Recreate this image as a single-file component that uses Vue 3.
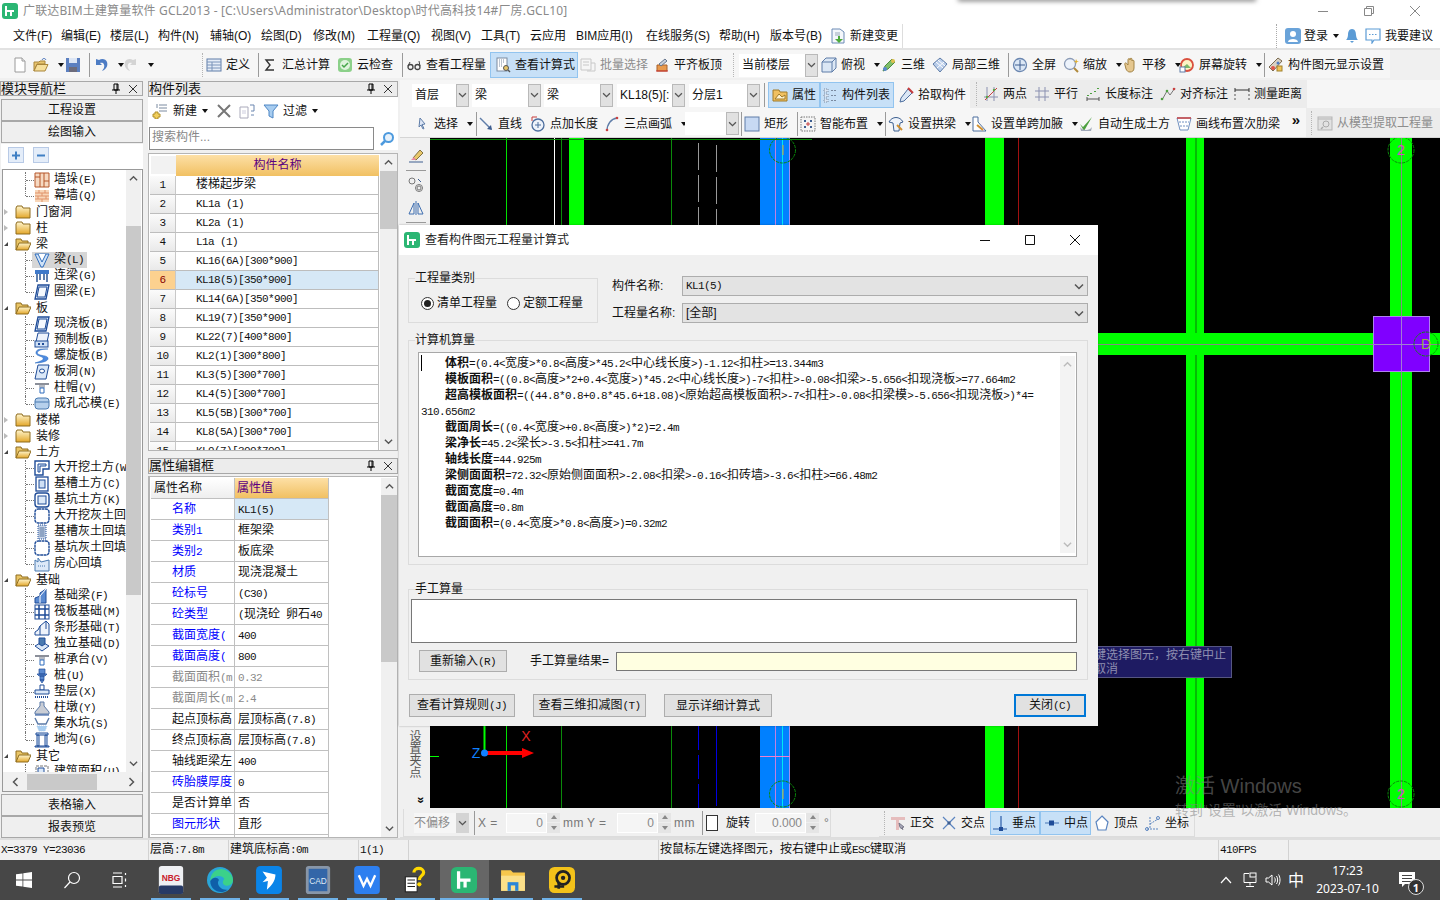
<script setup>
// GCL2013 main window with the quantity formula dialog open
const seg = (s) => s.split(/([\x20-\x7e]+)/).filter(Boolean).map((t) => ({ t, m: /^[\x20-\x7e]/.test(t) }))

const menus = [
  ['文件(F)', 48], ['编辑(E)', 49], ['楼层(L)', 48], ['构件(N)', 52], ['辅轴(O)', 51], ['绘图(D)', 52], ['修改(M)', 54],
  ['工程量(Q)', 64], ['视图(V)', 50], ['工具(T)', 49], ['云应用', 46], ['BIM应用(I)', 70], ['在线服务(S)', 73], ['帮助(H)', 51], ['版本号(B)', 60],
]

const topBar = [
  { w: 12 }, { i: 'doc', w: 21 }, { i: 'open', c: 1, w: 32 }, { i: 'save', w: 20 }, { sep: 1, w: 8 },
  { i: 'undo', c: 1, w: 30 }, { i: 'redo', c: 1, w: 29 }, { w: 46 }, { grip: 1, w: 8 },
  { i: 'def', t: '定义', w: 48 }, { sep: 1, w: 8 }, { i: 'sigma', t: '汇总计算', w: 75 }, { i: 'cloud', t: '云检查', w: 61 }, { sep: 1, w: 8 },
  { i: 'glass', t: '查看工程量', w: 84 }, { i: 'calc', t: '查看计算式', w: 88, pl: 5, on: 1 },
  { i: 'batch', t: '批量选择', w: 76, pl: 2, off: 1 }, { i: 'align', t: '平齐板顶', w: 74 }, { grip: 1, w: 11 },
  { combo: '当前楼层', w: 79 }, { w: 3 }, { i: 'box', t: '俯视', c: 1, w: 60 }, { i: 'tri', t: '三维', w: 51 }, { i: 'cube', t: '局部三维', w: 72 }, { sep: 1, w: 8 },
  { i: 'fit', t: '全屏', w: 51 }, { i: 'zoom', t: '缩放', c: 1, w: 59 }, { i: 'hand', t: '平移', c: 1, w: 57 }, { i: 'rot', t: '屏幕旋转', c: 1, w: 81 }, { sep: 1, w: 8 },
  { i: 'disp', t: '构件图元显示设置', w: 121 },
]

const rowOne = [
  { w: 12 }, { combo: '首层', w: 57 }, { w: 3 }, { combo: '梁', w: 69 }, { w: 3 }, { combo: '梁', w: 69 }, { w: 4 }, { combo: 'KL18(5)[:', w: 68 }, { w: 4 }, { combo: '分层1', w: 71 }, { sep: 1, w: 8 },
  { i: 'attr', t: '属性', w: 52, pl: 4, on: 1 }, { i: 'list', t: '构件列表', w: 74, pl: 2, on: 1 }, { i: 'pick', t: '拾取构件', w: 76, pl: 4 },
  { grip: 1, w: 13, z: 1 }, { i: 'two', t: '两点', w: 51, z: 1 }, { i: 'para', t: '平行', w: 51, z: 1 }, { i: 'lenm', t: '长度标注', w: 73, z: 1 }, { i: 'alim', t: '对齐标注', w: 76, pl: 2, z: 1 }, { i: 'meas', t: '测量距离', w: 73, z: 1 },
]

const rowTwo = [
  { w: 14 }, { i: 'arrow', t: '选择', c: 1, w: 60 }, { sep: 1, w: 4 }, { i: 'line', t: '直线', w: 52 }, { i: 'pointlen', t: '点加长度', w: 74 }, { i: 'arc', t: '三点画弧', c: 1, w: 81 },
  { combo: ' ', w: 54 }, { sep: 1, w: 5 }, { i: 'rect', t: '矩形', w: 50 }, { sep: 1, w: 6 }, { i: 'smart', t: '智能布置', c: 1, w: 82 }, { sep: 1, w: 6 },
  { i: 'archb', t: '设置拱梁', c: 1, w: 83 }, { i: 'haunch', t: '设置单跨加腋', c: 1, w: 107 }, { i: 'auto', t: '自动生成土方', w: 98 }, { i: 'rib', t: '画线布置次肋梁', w: 110 },
  { more: 1, w: 20 }, { grip: 1, w: 11, z: 1 }, { i: 'model', t: '从模型提取工程量', w: 123, off: 1, z: 1 },
]

const snapBar = [
  { grip: 1, w: 11 }, { i: 'ortho', t: '正交', w: 51 }, { i: 'cross', t: '交点', w: 49 }, { i: 'perp', t: '垂点', w: 50, pl: 2, on: 1 }, { i: 'mid', t: '中点', w: 51, pl: 4, on: 1 },
  { i: 'vert', t: '顶点', w: 53, pl: 3 }, { i: 'coord', t: '坐标', w: 50, pl: 1 },
]

const tree = [
  { t: '墙垛(E)', i: 't-wall' }, { t: '幕墙(Q)', i: 't-brick', last: 1 },
  { f: 1, t: '门窗洞' }, { f: 1, t: '柱' }, { f: 1, open: 1, t: '梁' },
  { t: '梁(L)', i: 't-beam', picked: 1 }, { t: '连梁(G)', i: 't-lian' }, { t: '圈梁(E)', i: 't-slab', last: 1 },
  { f: 1, open: 1, t: '板' },
  { t: '现浇板(B)', i: 't-slab' }, { t: '预制板(B)', i: 't-pre' }, { t: '螺旋板(B)', i: 't-spiral' }, { t: '板洞(N)', i: 't-hole' }, { t: '柱帽(V)', i: 't-cap' }, { t: '成孔芯模(E)', i: 't-core', last: 1 },
  { f: 1, t: '楼梯' }, { f: 1, t: '装修' }, { f: 1, open: 1, t: '土方' },
  { t: '大开挖土方(W)', i: 't-dig' }, { t: '基槽土方(C)', i: 't-slot' }, { t: '基坑土方(K)', i: 't-pit' }, { t: '大开挖灰土回填', i: 't-pit2' }, { t: '基槽灰土回填', i: 't-slot2' }, { t: '基坑灰土回填', i: 't-pit2' }, { t: '房心回填', i: 't-fill', last: 1 },
  { f: 1, open: 1, t: '基础' },
  { t: '基础梁(F)', i: 't-fbeam' }, { t: '筏板基础(M)', i: 't-raft' }, { t: '条形基础(T)', i: 't-strip' }, { t: '独立基础(D)', i: 't-ind' }, { t: '桩承台(V)', i: 't-cap' }, { t: '桩(U)', i: 't-pile' }, { t: '垫层(X)', i: 't-pad' }, { t: '柱墩(Y)', i: 't-pier' }, { t: '集水坑(S)', i: 't-sump' }, { t: '地沟(G)', i: 't-trench', last: 1 },
  { f: 1, open: 1, t: '其它' }, { t: '建筑面积(U)', i: 't-area' },
]

const parts = ['楼梯起步梁', 'KL1a (1)', 'KL2a (1)', 'L1a (1)', 'KL16(6A)[300*900]', 'KL18(5)[350*900]', 'KL14(6A)[350*900]', 'KL19(7)[350*900]', 'KL22(7)[400*800]', 'KL2(1)[300*800]', 'KL3(5)[300*700]', 'KL4(5)[300*700]', 'KL5(5B)[300*700]', 'KL8(5A)[300*700]', 'KL9(7)[300*700]']

const attrs = [
  ['名称', 'KL1(5)', 'b'], ['类别1', '框架梁', 'b'], ['类别2', '板底梁', 'b'], ['材质', '现浇混凝土', 'b'], ['砼标号', '(C30)', 'b'], ['砼类型', '(现浇砼 卵石40', 'b'],
  ['截面宽度(', '400', 'b'], ['截面高度(', '800', 'b'], ['截面面积(m', '0.32', 'g'], ['截面周长(m', '2.4', 'g'], ['起点顶标高', '层顶标高(7.8)', ''], ['终点顶标高', '层顶标高(7.8)', ''],
  ['轴线距梁左', '400', ''], ['砖胎膜厚度', '0', 'b'], ['是否计算单', '否', ''], ['图元形状', '直形', 'b'], ['', '', ''],
]

const formulas = [
  ['体积', '=(0.4<宽度>*0.8<高度>*45.2<中心线长度>)-1.12<扣柱>=13.344m3'],
  ['模板面积', '=((0.8<高度>*2+0.4<宽度>)*45.2<中心线长度>)-7<扣柱>-0.08<扣梁>-5.656<扣现浇板>=77.664m2'],
  ['超高模板面积', '=((44.8*0.8+0.8*45.6+18.08)<原始超高模板面积>-7<扣柱>-0.08<扣梁模>-5.656<扣现浇板>)*4='],
  ['', '310.656m2'],
  ['截面周长', '=((0.4<宽度>+0.8<高度>)*2)=2.4m'],
  ['梁净长', '=45.2<梁长>-3.5<扣柱>=41.7m'],
  ['轴线长度', '=44.925m'],
  ['梁侧面面积', '=72.32<原始侧面面积>-2.08<扣梁>-0.16<扣砖墙>-3.6<扣柱>=66.48m2'],
  ['截面宽度', '=0.4m'],
  ['截面高度', '=0.8m'],
  ['截面面积', '=(0.4<宽度>*0.8<高度>)=0.32m2'],
]

const status = [['X=3379 Y=23036', 149], ['层高:7.8m', 80], ['建筑底标高:0m', 130], ['1(1)', 50], ['', 250], ['按鼠标左键选择图元，按右键中止或ESC键取消', 560], ['410FPS', 70]]

const apps = [['a-nbg', 1], ['a-edge', 1], ['a-feather', 1], ['a-cad', 1], ['a-wps', 1], ['a-help', 1], ['a-gcl', 1, 1], ['a-files', 1], ['a-lens', 1]]

const kind = (it) => {
  if (it.sep) return 'sep'
  if (it.grip) return 'grip'
  if (it.combo) return 'combo'
  if (it.more) return 'more'
  return { btn: it.t || it.i, on: it.on, off: it.off }
}
const boxStyle = (it) => ({ width: it.w + 'px', paddingLeft: (it.pl || 0) + 'px' })
</script>

<template>
  <div class="app">
    <svg class="sprite" width="0" height="0">
      <defs>
        <linearGradient id="gold" x1="0" y1="0" x2="0" y2="1"><stop offset="0" stop-color="#fff6cf" /><stop offset="1" stop-color="#e3a72a" /></linearGradient>
        <symbol id="gcl" viewBox="0 0 16 16"><rect width="16" height="16" rx="3" fill="#2bb673"/><path d="M4 3v10M4 8h8M9 8v5" stroke="#fff" stroke-width="2" fill="none"/></symbol>
        <symbol id="doc" viewBox="0 0 16 16"><path d="M3 1h7l3 3v11H3z" fill="#fff" stroke="#9a9a9a"/><path d="M10 1v3h3" fill="#eee" stroke="#9a9a9a"/></symbol>
        <symbol id="open" viewBox="0 0 16 16"><path d="M1 5h5l1-1h5v3H4l-3 7z" fill="#e8c56e" stroke="#a9853a"/><path d="M4 7.500h11l-3 6.500H1z" fill="#f6df9b" stroke="#a9853a"/><path d="M9 3c1-2 3-2 4 0" stroke="#3b68b5" fill="none"/></symbol>
        <symbol id="save" viewBox="0 0 16 16"><path d="M1 1h14v14H1z" fill="#5b7fc0"/><path d="M4 1h8v5H4z" fill="#dde6f5"/><path d="M4 10h8v5H4z" fill="#6c6c7c"/></symbol>
        <symbol id="undo" viewBox="0 0 16 16"><path d="M3 2v6h6L7 6c3-1 5 1 4 5l-2 3c5-2 6-6 5-9-1-3-5-4-8-2z" fill="#4d7cc4"/></symbol>
        <symbol id="redo" viewBox="0 0 16 16"><path d="M13 2v6H7l2-2c-3-1-5 1-4 5l2 3C2 12 1 8 2 5c1-3 5-4 8-2z" fill="#d4d4d4"/></symbol>
        <symbol id="def" viewBox="0 0 16 16"><rect x="1" y="2" width="14" height="12" fill="#e6edf7" stroke="#5f7da8"/><path d="M1 5h14M6 5v9M1 8h14M1 11h14" stroke="#7b94ba"/></symbol>
        <symbol id="sigma" viewBox="0 0 16 16"><path d="M12 3H4l4 5-4 5h8" fill="none" stroke="#333" stroke-width="1.400"/></symbol>
        <symbol id="cloud" viewBox="0 0 16 16"><rect x="1" y="1" width="14" height="14" rx="3" fill="#8bd089"/><circle cx="8" cy="8" r="5" fill="#dff3dd"/><path d="M5 8l2 2 4-4" stroke="#45a549" stroke-width="1.500" fill="none"/></symbol>
        <symbol id="glass" viewBox="0 0 16 16"><circle cx="4.500" cy="10" r="2.500" fill="none" stroke="#444" stroke-width="1.300"/><circle cx="11.500" cy="10" r="2.500" fill="none" stroke="#444" stroke-width="1.300"/><path d="M2 9l2-4M14 9l-1-5" stroke="#444"/></symbol>
        <symbol id="calc" viewBox="0 0 16 16"><rect x="2" y="1" width="10" height="13" fill="#fff" stroke="#7a8aa0"/><path d="M4 3h6M4 5h6M4 7h4M4 9h4" stroke="#7a8aa0" stroke-dasharray="1 1"/><circle cx="11" cy="11" r="2.500" fill="#e6c66a" stroke="#555"/><path d="M13 13l2 2" stroke="#555" stroke-width="1.500"/></symbol>
        <symbol id="batch" viewBox="0 0 16 16"><path d="M1 2h10v11H1zM3 5h6M3 8h6M11 6h4v8H7" fill="none" stroke="#c8c8c8"/></symbol>
        <symbol id="align" viewBox="0 0 16 16"><path d="M3 14V8h10v6z" fill="#e89a4d" stroke="#a8602a"/><path d="M5 7l6-5 2 2-6 5z" fill="#c7cfdb" stroke="#68788f"/><path d="M2 14h12" stroke="#c33"/></symbol>
        <symbol id="box" viewBox="0 0 16 16"><path d="M1 5l4-4h10v10l-4 4H1z" fill="#dbe7f5" stroke="#5f7da8"/><path d="M1 5h10v10M11 5l4-4" fill="none" stroke="#5f7da8"/></symbol>
        <symbol id="tri" viewBox="0 0 16 16"><path d="M11 2L4 9l-2 5 5-2 7-7z" fill="#7fbf6a" stroke="#4d8a3e"/><circle cx="12" cy="4" r="2" fill="#e0c050"/><circle cx="4" cy="12" r="2" fill="#5a8ad0"/></symbol>
        <symbol id="cube" viewBox="0 0 16 16"><path d="M8 1l7 6-7 8-7-8z" fill="#b9cdea" stroke="#5f7da8"/><path d="M4 5l7 6M6 3l7 6M12 5l-7 6" stroke="#fff"/></symbol>
        <symbol id="fit" viewBox="0 0 16 16"><circle cx="8" cy="8" r="6.500" fill="#dbe7f5" stroke="#6a86b0" stroke-width="1.300"/><path d="M8 3v10M3 8h10" stroke="#3e5e90"/></symbol>
        <symbol id="zoom" viewBox="0 0 16 16"><circle cx="7" cy="7" r="5.500" fill="#edf3fb" stroke="#8a9ab5" stroke-width="1.300"/><path d="M11 11l4 4" stroke="#b08a3c" stroke-width="2"/><path d="M13 2l1 2 2 .500-2 .500-1 2-.500-2-2-.500 2-.500z" fill="#e0b030"/></symbol>
        <symbol id="hand" viewBox="0 0 16 16"><path d="M3 8c-1-2 1-3 2-1l1 1V3c0-2 2-2 2 0V2c0-1 2-1 2 0v2c0-1 2-1 2 0v7c0 3-2 4-4 4s-3-1-4-3z" fill="#e5c78f" stroke="#a28345"/></symbol>
        <symbol id="rot" viewBox="0 0 16 16"><circle cx="8" cy="8" r="6" fill="#fdf2c5" stroke="#d94f3d" stroke-width="1.800"/><path d="M3 11l5-4 4 4z" fill="#7cb86a"/><rect x="1" y="10" width="5" height="5" fill="#fff" stroke="#5f7da8"/></symbol>
        <symbol id="disp" viewBox="0 0 16 16"><path d="M1 10l9-9 4 3-9 10z" fill="#d9d2c4" stroke="#7a6a50"/><circle cx="5" cy="11" r="2" fill="#e0564a"/><circle cx="10" cy="6" r="1.500" fill="#4d7cc4"/><rect x="9" y="9" width="5" height="5" fill="#f1c557" stroke="#a0802c"/></symbol>
        <symbol id="newch" viewBox="0 0 16 16"><path d="M2 1h8l4 3v11H2z" fill="#f4f7fb" stroke="#6a8ab5"/><path d="M5 5h5M5 7h5" stroke="#9ab"/><path d="M10 8v3h3l-4 4-4-4h3V8z" fill="#4eaa3c"/></symbol>
        <symbol id="login" viewBox="0 0 16 16"><rect width="16" height="16" rx="3" fill="#6aa3d9"/><circle cx="8" cy="6" r="3" fill="#fff"/><path d="M3 14c0-4 10-4 10 0z" fill="#fff"/></symbol>
        <symbol id="bell" viewBox="0 0 16 16"><path d="M8 1c3 0 4 3 4 6s2 5 2 5H2s2-2 2-5 1-6 4-6z" fill="#5b9bd5"/><path d="M6 13h4l-2 2z" fill="#5b9bd5"/></symbol>
        <symbol id="chat" viewBox="0 0 16 16"><path d="M1 1h14v11H9l-2 3v-3H1z" fill="#fff" stroke="#5b9bd5" stroke-width="1.200"/><path d="M4 6.500h8" stroke="#5b9bd5" stroke-dasharray="1.500 1.500"/></symbol>
        <symbol id="attr" viewBox="0 0 16 16"><path d="M1 3h6l1 2h7v9H1z" fill="#f0c060" stroke="#a07a28"/><path d="M3 12l4-5 3 3 3-2v4H3z" fill="#fff3d0" stroke="#a07a28"/></symbol>
        <symbol id="list" viewBox="0 0 16 16"><path d="M2 2h4v3H2zM2 7h4v3H2zM2 12h4v3H2z" fill="#dbe7f5" stroke="#7a8aa0" stroke-dasharray="1 1"/><path d="M9 3.500h6M9 8.500h6M9 13.500h6" stroke="#7a8aa0" stroke-dasharray="2 1"/></symbol>
        <symbol id="pick" viewBox="0 0 16 16"><path d="M10 2l4 4-8 8-4 1 1-4z" fill="#dbe7f5" stroke="#4d6e9e"/><path d="M10 1l5 5" stroke="#c83c3c" stroke-width="2"/></symbol>
        <symbol id="two" viewBox="0 0 16 16"><path d="M4 1v14M11 1v14M1 11h14" stroke="#8a90b0"/><path d="M2 14L14 2" stroke="#c84040"/><circle cx="4" cy="11" r="1.200" fill="#5aa848"/><circle cx="11" cy="4" r="1.200" fill="#5aa848"/></symbol>
        <symbol id="para" viewBox="0 0 16 16"><path d="M5 1v14M11 1v14M1 5h14M1 11h14" stroke="#8a90b0"/></symbol>
        <symbol id="lenm" viewBox="0 0 16 16"><path d="M2 13h12M2 11v4M14 11v4" stroke="#555"/><path d="M3 9v1M6 7v1M10 5v1M13 2v1" stroke="#4da040" stroke-width="2"/></symbol>
        <symbol id="alim" viewBox="0 0 16 16"><path d="M2 14L7 5l3 4 5-7" fill="none" stroke="#777"/><circle cx="2" cy="13" r="1.300" fill="#4da040"/><circle cx="7" cy="5" r="1.300" fill="#4da040"/><circle cx="14" cy="3" r="1.300" fill="#c84040"/></symbol>
        <symbol id="meas" viewBox="0 0 16 16"><path d="M1 2v4M15 2v4M1 4h14" stroke="#333"/><path d="M1 8v7M15 8v7" stroke="#555" stroke-dasharray="2 2"/></symbol>
        <symbol id="arrow" viewBox="0 0 16 16"><path d="M6 2l5 6-3 .500 2 4-1 .500-2-4-2 2z" fill="#dde6f5" stroke="#5f7da8"/></symbol>
        <symbol id="line" viewBox="0 0 16 16"><path d="M2 2l11 11" stroke="#5f7da8" stroke-width="1.400"/><path d="M14 14l-5-1 4-4z" fill="#3e5e90"/></symbol>
        <symbol id="pointlen" viewBox="0 0 16 16"><circle cx="8" cy="9" r="6" fill="#eef3fa" stroke="#4d6e9e" stroke-width="1.300"/><path d="M8 6v6M5 9h6" stroke="#4d6e9e"/><path d="M2 1h5M2 1v4" stroke="#c83c3c"/></symbol>
        <symbol id="arc" viewBox="0 0 16 16"><path d="M3 15C3 8 7 3 13 2" fill="none" stroke="#5f7da8" stroke-width="1.300"/><circle cx="3" cy="14" r="1.300" fill="#c84040"/><circle cx="13" cy="2" r="1.300" fill="#c84040"/></symbol>
        <symbol id="rect" viewBox="0 0 16 16"><rect x="1" y="1" width="14" height="14" fill="#c7d9f3" stroke="#5f7da8"/></symbol>
        <symbol id="smart" viewBox="0 0 16 16"><rect x="1" y="1" width="14" height="14" fill="#f4f4f4" stroke="#777" stroke-dasharray="1.500 1"/><path d="M4 4h2v2H4zM10 4h2v2h-2zM4 10h2v2H4zM10 10h2v2h-2z" fill="#3e5e90"/><path d="M8 6v4M6 8h4" stroke="#c84040"/></symbol>
        <symbol id="archb" viewBox="0 0 16 16"><path d="M1 6c3-6 11-6 14 0l-3 1-1 8H6L5 7z" fill="#eef3fa" stroke="#3e6090"/><path d="M9 9l5 5" stroke="#d09030" stroke-width="2"/></symbol>
        <symbol id="haunch" viewBox="0 0 16 16"><path d="M2 1h5v5l8 9H2z" fill="#fff" stroke="#4d6e9e"/><path d="M6 9l6 5" stroke="#d09030" stroke-width="2"/></symbol>
        <symbol id="auto" viewBox="0 0 16 16"><path d="M2 8l3 3 9-10-8 14z" fill="#4da040"/><path d="M2 11c2 4 10 4 12 0l-1 4H3z" fill="#a0a8b8"/></symbol>
        <symbol id="rib" viewBox="0 0 16 16"><path d="M1 2h14L12 14H4z" fill="#fff" stroke="#7090c0"/><path d="M1 2h14" stroke="#c84040" stroke-width="1.500"/><path d="M3 6h10M4 10h8" stroke="#7090c0" stroke-dasharray="2 1"/></symbol>
        <symbol id="model" viewBox="0 0 16 16"><rect x="1" y="2" width="14" height="13" fill="#e2e2e2" stroke="#b5b5b5"/><path d="M1 4h14" stroke="#b5b5b5"/><circle cx="9" cy="9" r="3" fill="none" stroke="#aaa"/><path d="M6 12l-2 2" stroke="#aaa" stroke-width="1.500"/></symbol>
        <symbol id="ortho" viewBox="0 0 16 16"><path d="M1 2h14v3H9v10H6V5H1z" fill="#e6bdbd"/><path d="M9 8l5 4-2 .500 1 2-3-2z" fill="#aab" stroke="#778"/></symbol>
        <symbol id="cross" viewBox="0 0 16 16"><path d="M2 2l12 12M14 2L2 14" stroke="#5b85c0" stroke-width="1.200"/><rect x="6.500" y="6.500" width="3" height="3" fill="#3e5e90"/></symbol>
        <symbol id="perp" viewBox="0 0 16 16"><path d="M9 1v13M1 14h14" stroke="#2a5ca8" stroke-width="1.200"/><rect x="7" y="12" width="4" height="4" fill="#1f4c98"/></symbol>
        <symbol id="mid" viewBox="0 0 16 16"><path d="M1 8h14" stroke="#5b85c0" stroke-width="1.200"/><rect x="5" y="5.500" width="5" height="5" fill="#1f4c98"/></symbol>
        <symbol id="vert" viewBox="0 0 16 16"><path d="M8 1l6 6-2 8H4L2 7z" fill="#fff" stroke="#5b85c0" stroke-width="1.200"/></symbol>
        <symbol id="coord" viewBox="0 0 16 16"><path d="M2 14h12M5 2v12M5 9l8-5" stroke="#5b85c0" stroke-dasharray="2 1" fill="none"/><circle cx="13" cy="3" r="1.500" fill="none" stroke="#5b85c0"/><circle cx="2" cy="14" r="1.500" fill="none" stroke="#5b85c0"/></symbol>
        <symbol id="pin" viewBox="0 0 10 12"><path d="M3 1h4v6H3zM1 7h8M5 7v4M6 1v6" fill="none" stroke="#000"/></symbol>
        <symbol id="xx" viewBox="0 0 10 10"><path d="M1 1l8 8M9 1L1 9" stroke="#333"/></symbol>
        <symbol id="up" viewBox="0 0 10 7"><path d="M1 5.500l4-4 4 4" fill="none" stroke="#555" stroke-width="1.500"/></symbol>
        <symbol id="down" viewBox="0 0 10 7"><path d="M1 1.500l4 4 4-4" fill="none" stroke="#555" stroke-width="1.500"/></symbol>
        <symbol id="left" viewBox="0 0 7 10"><path d="M5.500 1l-4 4 4 4" fill="none" stroke="#555" stroke-width="1.500"/></symbol>
        <symbol id="right" viewBox="0 0 7 10"><path d="M1.500 1l4 4-4 4" fill="none" stroke="#555" stroke-width="1.500"/></symbol>
        <symbol id="plus" viewBox="0 0 16 16"><rect x=".5" y=".5" width="15" height="15" fill="#e4edf9" stroke="#b8cae6"/><path d="M4 8.500h8M8 4.500v8" stroke="#3f7fc4" stroke-width="2"/></symbol>
        <symbol id="minus" viewBox="0 0 16 16"><rect x=".5" y=".5" width="15" height="15" fill="#e4edf9" stroke="#b8cae6"/><path d="M4 8.500h8" stroke="#3f7fc4" stroke-width="2"/></symbol>
        <symbol id="folder" viewBox="0 0 16 14"><path d="M1 3l1-2h5l1 2h7v10H1z" fill="url(#gold)" stroke="#8f6d1f"/></symbol>
        <symbol id="folderopen" viewBox="0 0 16 14"><path d="M1 13V2h5l1 2h6v2" fill="#e9c566" stroke="#8f6d1f"/><path d="M4 6h12l-3 7H1z" fill="url(#gold)" stroke="#8f6d1f"/></symbol>
        <symbol id="newp" viewBox="0 0 16 16"><path d="M7 2h8M7 5h8M7 8h8" stroke="#7a8aa0"/><path d="M5 1v4" stroke="#7a8aa0"/><path d="M3 9h3v2h2v3H6v2H3v-2H1v-3h2z" fill="#f2cf5b" stroke="#b0902c"/></symbol>
        <symbol id="del" viewBox="0 0 16 16"><path d="M2 2l12 12M14 2L2 14" stroke="#777" stroke-width="2"/></symbol>
        <symbol id="copy" viewBox="0 0 16 16"><path d="M1 4h8v11H1z" fill="#fff" stroke="#aab"/><path d="M3 8h4M3 10h4" stroke="#ccd"/><path d="M11 2h4v6h-3M12 12h3" fill="none" stroke="#6a86b0"/></symbol>
        <symbol id="funnel" viewBox="0 0 16 16"><path d="M1 2h14L10 8v7l-4-2V8z" fill="#a8cdf0" stroke="#4d86c4"/></symbol>
        <symbol id="search" viewBox="0 0 16 16"><circle cx="9.500" cy="6.500" r="4.500" fill="#e6f1fb" stroke="#4d9ade" stroke-width="2"/><path d="M6 10l-4 4" stroke="#4d9ade" stroke-width="2.500"/></symbol>
        <symbol id="erase" viewBox="0 0 16 16"><path d="M5 10l7-8 3 3-7 7z" fill="#e8c86a" stroke="#807040"/><path d="M3 12l3-3 2 3z" fill="#e88aa0"/><path d="M1 14h14" stroke="#3e5e90"/></symbol>
        <symbol id="rings" viewBox="0 0 16 16"><circle cx="4" cy="4" r="3" fill="none" stroke="#777"/><circle cx="11" cy="11" r="3.500" fill="none" stroke="#777"/><circle cx="11" cy="11" r="2" fill="none" stroke="#777"/><path d="M10 2l3 3" stroke="#3e5e90"/></symbol>
        <symbol id="mirror" viewBox="0 0 16 16"><path d="M8 1v14M6 3L1 14h5zM10 3l5 11h-5z" fill="none" stroke="#3e6eb0"/></symbol>
        <symbol id="t-wall" viewBox="0 0 16 16"><path d="M1 1h14v14H1z" fill="#f6d9c2" stroke="#b5562a"/><path d="M6 1v14M10 1v14M1 5h5M10 9h5" stroke="#b5562a"/></symbol>
        <symbol id="t-brick" viewBox="0 0 16 16"><path d="M1 2h14v12H1z" fill="#f8d6b8"/><path d="M1 5h14M1 8h14M1 11h14M5 2v3M11 2v3M8 5v3M4 8v3M12 8v3M8 11v3" stroke="#e0936a"/></symbol>
        <symbol id="t-beam" viewBox="0 0 16 16"><path d="M1 2h14L9 15H7z" fill="#cfe2f7" stroke="#2f6dbd"/><path d="M4 2l4 8 4-8" fill="#fff" stroke="#2f6dbd"/></symbol>
        <symbol id="t-lian" viewBox="0 0 16 16"><path d="M1 2h14v4H1z" fill="#3f79c9"/><path d="M3 6v8M6 6v6M10 6v6M13 6v8" stroke="#1d4a8c" stroke-width="1.400"/></symbol>
        <symbol id="t-slab" viewBox="0 0 16 16"><path d="M4 1h11l-3 14H1z" fill="#d9e7f8" stroke="#1f4c98" stroke-width="1.300"/><path d="M5 3h8l-2 10H3z" fill="#f5f9fe" stroke="#1f4c98"/></symbol>
        <symbol id="t-pre" viewBox="0 0 16 16"><path d="M4 1h11l-2 9H2z" fill="#eef3fb" stroke="#1f4c98"/><rect x="1" y="9" width="13" height="6" fill="#cfe0f5" stroke="#1f4c98"/><path d="M4 12h2M8 12h2" stroke="#1f4c98" stroke-width="2"/></symbol>
        <symbol id="t-spiral" viewBox="0 0 16 16"><path d="M14 1C5 1 2 4 4 6s9 1 10 4-6 5-13 5c6-2 9-3 8-5S1 8 2 4s8-3 12-3z" fill="#4d8ae0" stroke="#2f6dbd" stroke-width=".5"/></symbol>
        <symbol id="t-hole" viewBox="0 0 16 16"><path d="M4 1h11l-3 14H1z" fill="#dbe8f8" stroke="#1f4c98"/><ellipse cx="8" cy="7" rx="2.500" ry="2" fill="#fff" stroke="#1f4c98"/></symbol>
        <symbol id="t-cap" viewBox="0 0 16 16"><path d="M1 3h14v2H1z" fill="#8b8f99"/><path d="M5 5h6v3H5z" fill="#b5bac4"/><path d="M6 8h4v5H6z" fill="#fff" stroke="#2f6dbd"/></symbol>
        <symbol id="t-core" viewBox="0 0 16 16"><rect x="1" y="2" width="14" height="11" rx="3" fill="#b6d0ec" stroke="#4a7ab0"/><path d="M1 6h14" stroke="#4a7ab0"/></symbol>
        <symbol id="t-dig" viewBox="0 0 16 16"><path d="M1 1h14v8H9v6H1z" fill="#fff" stroke="#1f4c98" stroke-width="1.400"/><path d="M4 4h8v2H6v6H4z" fill="#dce9f8" stroke="#1f4c98"/></symbol>
        <symbol id="t-slot" viewBox="0 0 16 16"><rect x="2" y="1" width="12" height="14" fill="#fff" stroke="#1f4c98" stroke-width="1.300"/><rect x="5" y="4" width="6" height="8" fill="#cfe0f5" stroke="#1f4c98"/></symbol>
        <symbol id="t-pit" viewBox="0 0 16 16"><rect x="1" y="1" width="14" height="14" rx="3" fill="#fff" stroke="#1f4c98" stroke-width="1.400"/><rect x="4" y="4" width="8" height="8" fill="#dce9f8" stroke="#1f4c98"/></symbol>
        <symbol id="t-pit2" viewBox="0 0 16 16"><rect x="1" y="1" width="14" height="14" rx="3" fill="#fff" stroke="#1f4c98" stroke-width="1.400" stroke-dasharray="3 .5"/></symbol>
        <symbol id="t-slot2" viewBox="0 0 16 16"><rect x="4" y="1" width="8" height="14" fill="#c7d4e8" stroke="#1f4c98" stroke-dasharray="1 1"/><rect x="5.500" y="3" width="5" height="10" fill="#8ea4c4"/></symbol>
        <symbol id="t-fill" viewBox="0 0 16 16"><path d="M1 4l3 2V2l3 4 8-2v11H1z" fill="#dce9f8" stroke="#4a7ab0"/><path d="M4 10h8" stroke="#4a7ab0" stroke-dasharray="1 1"/></symbol>
        <symbol id="t-fbeam" viewBox="0 0 16 16"><path d="M1 15V10l5-2V5l6-4v14z" fill="#5b8ad0" stroke="#1f4c98"/><path d="M6 8v7M12 1L6 8" stroke="#fff"/></symbol>
        <symbol id="t-raft" viewBox="0 0 16 16"><rect x="1" y="1" width="14" height="14" fill="#fff" stroke="#1f4c98"/><path d="M1 5h14M1 11h14M5 1v14M11 1v14" stroke="#1f4c98" stroke-width="1.500"/></symbol>
        <symbol id="t-strip" viewBox="0 0 16 16"><path d="M1 15v-3l3-2 2-4 6-5 3 3v11z" fill="#eef3fb" stroke="#1f4c98"/><path d="M6 6v9M12 1v8" stroke="#1f4c98"/></symbol>
        <symbol id="t-ind" viewBox="0 0 16 16"><path d="M1 10l7-4 7 4-7 5z" fill="#dce9f8" stroke="#1f4c98"/><path d="M5 2h6v6l-3 2-3-2z" fill="#4a7ab0" stroke="#1f4c98"/></symbol>
        <symbol id="t-pile" viewBox="0 0 16 16"><path d="M5 1h6v5H5zM3 6h10l-2 2H5zM6 8h4v4H6zM6 12h4l-2 3z" fill="#5b8ad0" stroke="#1f4c98" stroke-width=".7"/></symbol>
        <symbol id="t-pad" viewBox="0 0 16 16"><path d="M6 1h4v5H6z" fill="#fff" stroke="#1f4c98"/><path d="M1 6h14v4H1z" fill="#dce9f8" stroke="#1f4c98"/><path d="M1 13h14" stroke="#1f4c98" stroke-dasharray="1 1" stroke-width="2"/></symbol>
        <symbol id="t-pier" viewBox="0 0 16 16"><path d="M6 2h4v4l5 6v2H1v-2l5-6z" fill="#c9cdd5" stroke="#5b7aa8"/><path d="M1 15h14" stroke="#1f4c98"/></symbol>
        <symbol id="t-sump" viewBox="0 0 16 16"><path d="M1 2l3 6h8l3-6" fill="none" stroke="#5b7aa8" stroke-width="1.400"/><path d="M3 10h10l-2 5H5z" fill="#a8cdf0" stroke="#a8cdf0" stroke-dasharray="1 1"/></symbol>
        <symbol id="t-trench" viewBox="0 0 16 16"><path d="M2 1l12 0v2H2zM3 3h2v11H3zM11 3h2v11h-2zM1 14h14v1H1z" fill="#dce9f8" stroke="#1f4c98"/></symbol>
        <symbol id="t-area" viewBox="0 0 16 16"><path d="M2 2h12v12H2z" fill="#fff" stroke="#777" stroke-dasharray="3 1"/><path d="M4 4h6v6H4z" fill="#dce9f8" stroke="#1f4c98"/></symbol>
        <symbol id="a-nbg" viewBox="0 0 26 30"><rect width="26" height="30" rx="3" fill="#eef0f3"/><rect y="21" width="26" height="9" rx="2" fill="#273a66"/><text x="13" y="16" font-size="9" font-weight="700" text-anchor="middle" fill="#c8202c" font-family="Liberation Sans">NBG</text></symbol>
        <symbol id="a-edge" viewBox="0 0 24 24"><circle cx="12" cy="12" r="12" fill="#2aa5d8"/><path d="M12 2a11 11 0 0 1 12 10c0 4-4 6-7 5-3-1-3-4-1-6-2-4-9-4-13 2C3 7 7 2 12 2z" fill="#3bd18a"/><path d="M3 13c2-4 7-4 8-1-3 4 2 10 8 9-6 5-16 1-16-8z" fill="#0f5fa8"/></symbol>
        <symbol id="a-feather" viewBox="0 0 24 26"><rect width="24" height="26" rx="4" fill="#0a84e8"/><path d="M6 5l12 3c0 6-4 11-8 14l1-8-5 1 4-4z" fill="#fff"/></symbol>
        <symbol id="a-cad" viewBox="0 0 26 30"><rect width="26" height="30" rx="3" fill="#8896a8"/><rect x="3" y="3" width="20" height="24" fill="#3366a8"/><text x="13" y="19" font-size="9" text-anchor="middle" fill="#dfe9f5" font-family="Liberation Sans">CAD</text></symbol>
        <symbol id="a-wps" viewBox="0 0 22 24"><rect width="22" height="24" rx="3" fill="#2d7ff0"/><path d="M4 8l4 9 3-6 3 6 4-9" fill="none" stroke="#fff" stroke-width="2"/></symbol>
        <symbol id="a-help" viewBox="0 0 22 26"><rect x="2" y="10" width="11" height="14" fill="#fff" stroke="#222"/><path d="M4 13h7M4 16h7M4 19h7" stroke="#222"/><path d="M10 6c0-5 9-5 9 0 0 3-4 3-4 7" fill="none" stroke="#ffd800" stroke-width="3"/><circle cx="15" cy="17" r="2" fill="#ffd800"/></symbol>
        <symbol id="a-gcl" viewBox="0 0 24 24"><rect width="24" height="24" rx="5" fill="#2bb673"/><path d="M7 4v16M7 12h11M13 12v7" stroke="#fff" stroke-width="3" fill="none"/></symbol>
        <symbol id="a-files" viewBox="0 0 24 24"><path d="M1 3h9l2 2h11v17H1z" fill="#f7c74c"/><path d="M1 8h22v14H1z" fill="#fbe08a"/><path d="M7 14h10v8H7z" fill="#2a86d8"/><path d="M10 17h4v5h-4z" fill="#fbe08a"/></symbol>
        <symbol id="a-lens" viewBox="0 0 24 24"><rect width="24" height="24" rx="5" fill="#f3c21a"/><circle cx="13" cy="10" r="6" fill="none" stroke="#222" stroke-width="2.500"/><circle cx="13" cy="10" r="2" fill="#222"/><path d="M5 18h9M9 14v6" stroke="#222" stroke-width="2.500"/></symbol>
      </defs>
    </svg>

    <header class="title">
      <svg class="ic logo"><use href="#gcl" /></svg>
      <span class="title-text">广联达BIM土建算量软件 GCL2013 - [C:\Users\Administrator\Desktop\时代高科技14#厂房.GCL10]</span>
      <div class="winbtns">
        <svg width="12" height="12"><path d="M1 6.500h10" stroke="#888" /></svg>
        <svg width="12" height="12"><path d="M1.500 3.500h7v7h-7zM3.500 3V1.500h7v7H9" fill="none" stroke="#888" /></svg>
        <svg width="12" height="12"><path d="M1 1l10 10M11 1L1 11" stroke="#888" /></svg>
      </div>
    </header>

    <nav class="menubar">
      <div class="menu-left">
        <span v-for="m in menus" :key="m[0]" class="menu" :style="{ width: m[1] + 'px' }">{{ m[0] }}</span>
        <span class="menu-new"><svg class="ic"><use href="#newch" /></svg>新建变更</span>
      </div>
      <div class="menu-right">
        <svg class="ic"><use href="#login" /></svg><span class="mr-login">登录</span><i class="caret"></i>
        <svg class="ic bell"><use href="#bell" /></svg>
        <svg class="ic chat"><use href="#chat" /></svg><span>我要建议</span>
      </div>
    </nav>

    <div class="toolbar topbar">
      <div v-for="(it, n) in topBar" :key="n" :class="kind(it)" :style="boxStyle(it)">
        <svg v-if="it.i" class="ic"><use :href="'#' + it.i" /></svg>
        <span v-if="it.t">{{ it.t }}</span>
        <i v-if="it.c" class="caret"></i>
        <template v-if="it.combo"><span class="combo-t">{{ it.combo }}</span><b class="combo-a"><svg width="9" height="6"><use href="#down" /></svg></b></template>
      </div>
    </div>

    <main class="body">
      <aside class="nav">
        <div class="ptitle">模块导航栏<svg class="pin"><use href="#pin" /></svg><svg class="xx"><use href="#xx" /></svg></div>
        <button class="navbtn first">工程设置</button>
        <button class="navbtn">绘图输入</button>
        <div class="treetools">
          <svg class="ic"><use href="#plus" /></svg>
          <svg class="ic"><use href="#minus" /></svg>
        </div>
        <div class="treebox">
          <div class="treewrap">
            <ul class="tree">
              <li v-for="(r, n) in tree" :key="n" :class="r.f ? 'fold' : ['leaf', { last: r.last }]">
                <template v-if="r.f">
                  <i :class="r.open ? 'tw-open' : 'tw-closed'"></i>
                  <svg class="fi"><use :href="r.open ? '#folderopen' : '#folder'" /></svg>
                  <span>{{ r.t }}</span>
                </template>
                <span v-else class="leafin" :class="{ picked: r.picked }">
                  <svg class="ic"><use :href="'#' + r.i" /></svg>
                  <span class="lt"><span v-for="(s, k) in seg(r.t)" :key="k" :class="{ m: s.m }">{{ s.t }}</span></span>
                </span>
              </li>
            </ul>
            <div class="sb tree-sb">
              <svg class="chev"><use href="#up" /></svg>
              <div class="thumb tree-thumb"></div>
              <svg class="chev end"><use href="#down" /></svg>
            </div>
          </div>
          <div class="hsb">
            <svg class="chevh"><use href="#left" /></svg>
            <div class="hthumb"></div>
            <svg class="chevh end"><use href="#right" /></svg>
          </div>
        </div>
        <button class="navbtn low">表格输入</button>
        <button class="navbtn">报表预览</button>
      </aside>

      <section class="parts">
        <div class="ptitle">构件列表<svg class="pin"><use href="#pin" /></svg><svg class="xx"><use href="#xx" /></svg></div>
        <div class="parts-tools">
          <svg class="ic"><use href="#newp" /></svg><span class="pt-new">新建</span><i class="caret"></i>
          <svg class="ic pt-del"><use href="#del" /></svg>
          <svg class="ic pt-copy"><use href="#copy" /></svg>
          <svg class="ic pt-funnel"><use href="#funnel" /></svg><span>过滤</span><i class="caret"></i>
        </div>
        <div class="searchrow">
          <div class="searchbox">搜索构件...</div>
          <svg class="ic"><use href="#search" /></svg>
        </div>
        <div class="listbox">
          <div class="grid">
            <div class="ghead num"></div>
            <div class="ghead name">构件名称</div>
            <template v-for="(p, n) in parts" :key="n">
              <div class="gnum" :class="{ cur: n === 5 }"><span class="m">{{ n + 1 }}</span></div>
              <div class="gcell" :class="{ cur: n === 5 }"><span v-for="(s, k) in seg(p)" :key="k" :class="{ m: s.m }">{{ s.t }}</span></div>
            </template>
          </div>
          <div class="sb list-sb">
            <svg class="chev"><use href="#up" /></svg>
            <div class="thumb list-thumb"></div>
            <svg class="chev end"><use href="#down" /></svg>
          </div>
        </div>
        <div class="ptitle attr-title">属性编辑框<svg class="pin"><use href="#pin" /></svg><svg class="xx"><use href="#xx" /></svg></div>
        <div class="attrbox">
          <div class="attrgrid">
            <div class="ahead">属性名称</div>
            <div class="ahead val">属性值</div>
            <template v-for="(a, n) in attrs" :key="n">
              <div class="akey" :class="a[2]"><span v-for="(s, k) in seg(a[0])" :key="k" :class="{ m: s.m }">{{ s.t }}</span></div>
              <div class="aval" :class="[{ cur: n === 0 }, a[2] === 'g' ? 'g' : '']"><span v-for="(s, k) in seg(a[1])" :key="k" :class="{ m: s.m }">{{ s.t }}</span></div>
            </template>
          </div>
          <div class="sb attr-sb">
            <svg class="chev"><use href="#up" /></svg>
            <div class="thumb attr-thumb"></div>
            <svg class="chev end"><use href="#down" /></svg>
          </div>
        </div>
      </section>

      <section class="work">
        <div class="toolbar row1">
          <div v-for="(it, n) in rowOne" :key="n" :class="[kind(it), { zone: it.z }]" :style="boxStyle(it)">
            <svg v-if="it.i" class="ic"><use :href="'#' + it.i" /></svg>
            <span v-if="it.t">{{ it.t }}</span>
            <template v-if="it.combo"><span class="combo-t">{{ it.combo }}</span><b class="combo-a"><svg width="9" height="6"><use href="#down" /></svg></b></template>
          </div>
        </div>
        <div class="toolbar row2">
          <div v-for="(it, n) in rowTwo" :key="n" :class="[kind(it), { zone: it.z }]" :style="boxStyle(it)">
            <svg v-if="it.i" class="ic"><use :href="'#' + it.i" /></svg>
            <span v-if="it.t">{{ it.t }}</span>
            <i v-if="it.c" class="caret"></i>
            <template v-if="it.more">»</template>
            <template v-if="it.combo"><span class="combo-t">{{ it.combo }}</span><b class="combo-a"><svg width="9" height="6"><use href="#down" /></svg></b></template>
          </div>
        </div>

        <div class="stage">
          <div class="strip">
            <svg class="ic si1"><use href="#erase" /></svg>
            <hr />
            <svg class="ic"><use href="#rings" /></svg>
            <svg class="ic si3"><use href="#mirror" /></svg>
            <hr />
            <div class="strip-low">
              <span class="vtext">设置夹点</span>
              <span class="vmore">»</span>
            </div>
          </div>
          <svg class="canvas" viewBox="430 138 1010 670" preserveAspectRatio="none">
            <rect x="430" y="138" width="1010" height="670" fill="#000" />
            <path d="M506.500 138v670" stroke="#00e000" />
            <path d="M554.500 138v90" stroke="#fff" />
            <path d="M561.500 138v670M671.500 138v670" stroke="#0a8a0a" />
            <rect x="569" y="138" width="15" height="90" fill="#0f0" />
            <path d="M698.500 143v27M698.500 175v27M698.500 207v20M716.500 145v27M716.500 177v27M716.500 209v20" stroke="#999" />
            <path d="M698.500 726v24M698.500 755v24M698.500 784v24M716.500 726v80" stroke="#0000e0" />
            <rect x="760" y="138" width="30" height="670" fill="#0080ff" />
            <path d="M775.500 138v670" stroke="#c080e0" />
            <path d="M782.500 138v670" stroke="#00e8f0" />
            <path d="M789.500 138v670" stroke="#a090f0" />
            <path d="M760 756.500h30" stroke="#f080d0" />
            <path d="M430 139.500h382" stroke="#0a8a0a" />
            <circle cx="782.500" cy="150" r="13" fill="none" stroke="#0a8a0a" stroke-dasharray="3 1" />
            <path d="M783 145v10" stroke="#e0a030" />
            <circle cx="782.500" cy="794" r="13" fill="none" stroke="#0a8a0a" stroke-dasharray="3 1" />
            <path d="M783 789v10" stroke="#e0a030" />
            <rect x="985" y="138" width="19" height="670" fill="#0f0" />
            <path d="M1018.500 138v670" stroke="#a01010" />
            <rect x="1186" y="138" width="18" height="670" fill="#0f0" />
            <path d="M1196 138v670" stroke="#0a7a0a" />
            <rect x="1390" y="138" width="22" height="670" fill="#0f0" />
            <rect x="430" y="333" width="1010" height="22" fill="#0f0" />
            <path d="M1401.500 138v670" stroke="#888" />
            <path d="M430 344.500h1010" stroke="#888" />
            <rect x="1373.500" y="316.500" width="56" height="55" fill="#8000ff" stroke="#b080f0" />
            <path d="M1401.500 316v56M1373 344.500h57" stroke="#a080d0" />
            <circle cx="1401" cy="150" r="13" fill="none" stroke="#0a8a0a" stroke-dasharray="3 1" />
            <circle cx="1401" cy="794" r="13" fill="none" stroke="#0a8a0a" stroke-dasharray="3 1" />
            <circle cx="1426" cy="344" r="12" fill="none" stroke="#0a8a0a" stroke-dasharray="3 1" />
            <text x="1401" y="155" class="ct" fill="#e040d0">2</text>
            <text x="1401" y="799" class="ct" fill="#e040d0">2</text>
            <text x="1426" y="349" class="ct" fill="#90b040">D</text>
            <path d="M430 756.500h9" stroke="#0f0" />
            <path d="M484.500 726v28" stroke="#0f0" stroke-width="2" />
            <path d="M484 751h38v-3l12 5-12 5v-3h-38z" fill="#f00" />
            <circle cx="484.500" cy="753" r="3.500" fill="#1080ff" />
            <text x="526" y="741" class="ct small" fill="#e02020">X</text>
            <text x="476" y="758" class="ct small" fill="#1080ff">Z</text>
          </svg>
        </div>

        <div class="bottombar">
          <div class="offset">
            <div class="nooff">不偏移<b><svg width="9" height="6"><use href="#down" /></svg></b></div>
            <i class="vbar"></i>
            <span class="lbl x">X =</span>
            <div class="num"><span>0</span></div>
            <div class="spin"><i></i><i class="dn"></i></div>
            <span class="lbl mm">mm</span><span class="lbl y">Y =</span>
            <div class="num"><span>0</span></div>
            <div class="spin"><i></i><i class="dn"></i></div>
            <span class="lbl mm">mm</span>
            <i class="vbar v2"></i>
            <span class="check"></span>
            <span class="rot">旋转</span>
            <div class="num wide"><span>0.000</span></div>
            <div class="spin"><i></i><i class="dn"></i></div>
            <span class="lbl deg">°</span>
          </div>
          <div class="toolbar snap">
            <div v-for="(it, n) in snapBar" :key="n" :class="kind(it)" :style="boxStyle(it)">
              <svg v-if="it.i" class="ic"><use :href="'#' + it.i" /></svg>
              <span v-if="it.t">{{ it.t }}</span>
            </div>
          </div>
        </div>
      </section>
    </main>

    <footer class="statusbar">
      <span v-for="(s, n) in status" :key="n" class="cell" :style="{ width: s[1] + 'px' }"><span v-for="(p, k) in seg(s[0])" :key="k" :class="{ m: p.m }">{{ p.t }}</span></span>
    </footer>

    <div class="taskbar">
      <div class="tb-win">
        <svg width="16" height="16" viewBox="0 0 16 16"><path d="M0 2.300l6.500-.9v6.200H0zM7.300 1.300L16 0v7.600H7.300zM0 8.400h6.500v6.200L0 13.700zM7.300 8.400H16V16l-8.700-1.200z" fill="#fff" /></svg>
      </div>
      <div class="tb-win">
        <svg width="18" height="18" viewBox="0 0 18 18"><circle cx="11" cy="7" r="5.500" fill="none" stroke="#fff" stroke-width="1.200" /><path d="M7 11l-5.500 6" stroke="#fff" stroke-width="1.200" /></svg>
      </div>
      <div class="tb-win tb-view">
        <svg width="16" height="16" viewBox="0 0 16 16"><path d="M1 1h9M1 15h9M1 4.500h9v7H1zM13.500 1v2M13.500 6.500v3M13.500 13v2" fill="none" stroke="#fff" stroke-width="1.200" /></svg>
      </div>
      <div v-for="a in apps" :key="a[0]" class="tb-app" :class="{ act: a[2] }">
        <svg class="appic"><use :href="'#' + a[0]" /></svg>
        <i class="run"></i>
      </div>
      <div class="tray">
        <svg width="12" height="8" viewBox="0 0 12 8"><path d="M1 7l5-5.500L11 7" fill="none" stroke="#fff" stroke-width="1.200" /></svg>
        <svg width="16" height="16" viewBox="0 0 16 16"><path d="M2 1.500h5M2 1.500v9h12v-5M8 10.500v3M4 14.500h8" fill="none" stroke="#fff" /><rect x="8" y="1" width="6" height="4" fill="none" stroke="#fff" /></svg>
        <svg width="16" height="16" viewBox="0 0 16 16"><path d="M1 6h2.500L7 3v10L3.500 10H1zM9.500 5.500c1 1.500 1 3.500 0 5M11.500 4c1.500 2 1.500 6 0 8M13.500 2.500c2 3 2 8 0 11" fill="none" stroke="#fff" /></svg>
        <span class="ime">中</span>
        <div class="clock"><span>17:23</span><span>2023-07-10</span></div>
        <div class="notif">
          <svg width="16" height="16" viewBox="0 0 16 16"><path d="M0 0h16v12H6l-3 3v-3H0z" fill="#fff" /><path d="M3 3.500h10M3 6.500h10M3 9.500h10" stroke="#444" /></svg>
          <span class="badge">1</span>
        </div>
      </div>
    </div>

    <div class="topshadow"></div>

    <div class="hint">键选择图元，按右键中止<br />取消</div>

    <div class="dialog">
      <div class="dlg-title">
        <svg class="ic dlg-logo"><use href="#gcl" /></svg>
        <span>查看构件图元工程量计算式</span>
        <div class="dlg-btns">
          <svg width="12" height="12"><path d="M1 6.500h10" stroke="#111" /></svg>
          <svg width="12" height="12"><path d="M1.500 1.500h9v9h-9z" fill="none" stroke="#111" /></svg>
          <svg width="12" height="12"><path d="M1 1l10 10M11 1L1 11" stroke="#111" /></svg>
        </div>
      </div>
      <div class="dlg-body">
        <div class="dlg-top">
          <fieldset class="gb type">
            <legend>工程量类别</legend>
            <label class="radio"><i class="dot on"></i>清单工程量</label>
            <label class="radio r2"><i class="dot"></i>定额工程量</label>
          </fieldset>
          <div class="selects">
            <div class="sel-row"><span class="sel-l">构件名称:</span><div class="sel"><span class="m">KL1(5)</span><svg width="10" height="7"><use href="#down" /></svg></div></div>
            <div class="sel-row"><span class="sel-l">工程量名称:</span><div class="sel"><span>[全部]</span><svg width="10" height="7"><use href="#down" /></svg></div></div>
          </div>
        </div>
        <fieldset class="gb calc">
          <legend>计算机算量</legend>
          <div class="formula">
            <i class="cursor"></i>
            <div v-for="(f, n) in formulas" :key="n" class="fline" :class="{ wrap: !f[0] }">
              <b v-if="f[0]">{{ f[0] }}</b><span v-for="(s, k) in seg(f[1])" :key="k" :class="{ m: s.m }">{{ s.t }}</span>
            </div>
            <div class="sb form-sb">
              <svg class="chev pale"><use href="#up" /></svg>
              <svg class="chev end pale"><use href="#down" /></svg>
            </div>
          </div>
        </fieldset>
        <fieldset class="gb manual">
          <legend>手工算量</legend>
          <div class="mbox"></div>
          <div class="mrow">
            <button class="wbtn reset">重新输入<span class="m">(R)</span></button>
            <span class="mlbl">手工算量结果=</span>
            <div class="mres"></div>
          </div>
        </fieldset>
        <div class="dlg-foot">
          <button class="wbtn f1">查看计算规则<span class="m">(J)</span></button>
          <button class="wbtn f2">查看三维扣减图<span class="m">(T)</span></button>
          <button class="wbtn f3">显示详细计算式</button>
          <button class="wbtn close">关闭<span class="m">(C)</span></button>
        </div>
      </div>
    </div>

    <div class="watermark">
      <div class="wm1">激活 Windows</div>
      <div class="wm2">转到“设置”以激活 Windows。</div>
    </div>
  </div>
</template>

<style scoped>
.app {
  position: relative;
  width: 1440px;
  height: 900px;
  overflow: hidden;
  display: flex;
  flex-direction: column;
  background: #f0f0f0;
  color: #111;
  font: 12px/16px "Liberation Sans", "Noto Sans CJK SC", sans-serif;
}
.sprite { position: absolute; }
.m { font-family: "Liberation Mono", monospace; font-size: 11px; letter-spacing: -.6px; }
.ic { width: 16px; height: 16px; flex: none; display: block; }

/* window chrome */
.title {
  height: 22px;
  flex: none;
  background: #fff;
  display: flex;
  align-items: center;
  padding-left: 2px;
  color: #8a8a8a;
}
.logo { margin-right: 5px; }
.title-text { white-space: nowrap; font-family: "Noto Sans", "Noto Sans CJK SC", sans-serif; letter-spacing: .17px; }
.winbtns { margin-left: auto; display: flex; gap: 34px; padding-right: 19px; }
.menubar {
  height: 28px;
  flex: none;
  background: #fff;
  border-bottom: 2px solid #e2e2e2;
  display: flex;
  justify-content: space-between;
  padding: 2px 0 0 13px;
  box-sizing: border-box;
}
.menu-left { display: flex; align-items: center; padding-right: 4px; border-right: 1px solid #ddd; }
.menu { white-space: nowrap; }
.menu-new { display: flex; align-items: center; gap: 4px; }
.menu-right {
  display: flex;
  align-items: center;
  width: 164px;
  box-sizing: border-box;
  padding-left: 8px;
  border-left: 1px dotted #aaa;
}
.mr-login { margin-left: 3px; }
.bell { margin-left: 5px; }
.chat { margin: 0 4px 0 5px; }
.caret {
  width: 0;
  height: 0;
  flex: none;
  margin-left: 5px;
  border: 3px solid transparent;
  border-top: 4px solid #111;
  border-bottom: 0;
}

/* toolbars */
.toolbar { display: flex; align-items: stretch; white-space: nowrap; box-sizing: border-box; }
.topbar { height: 28px; flex: none; background: #f6f6f6; width: 1390px; margin-bottom: 2px; padding-top: 2px; }
.btn { display: flex; align-items: center; gap: 4px; box-sizing: border-box; flex: none; }
.btn.on { background: #c7e0f7; box-shadow: inset 0 0 0 1px #92c4ef; }
.btn.off { color: #8d8d8d; }
.sep, .grip { flex: none; display: flex; justify-content: center; align-items: center; }
.sep::before { content: ""; width: 1px; height: 24px; background: #9a9a9a; }
.grip::before { content: ""; height: 24px; border-left: 1px dotted #b5b5b5; }
.zone { background: #ececec; align-self: stretch; }
.combo {
  flex: none;
  display: flex;
  align-items: center;
  justify-content: space-between;
  height: 23px;
  align-self: center;
  box-sizing: border-box;
  background: #fff;
}
.combo-t { padding-left: 3px; overflow: hidden; }
.combo-a {
  width: 13px;
  height: 100%;
  background: #e1e1e1;
  border: 1px solid #b9b9b9;
  box-sizing: border-box;
  display: flex;
  align-items: center;
  justify-content: center;
}
.more { flex: none; text-align: center; font-size: 15px; font-weight: 700; line-height: 20px; }

/* main columns */
.body { flex: 1; display: flex; min-height: 0; }
.ptitle {
  position: relative;
  height: 14px;
  margin-top: 1px;
  background: #ececec;
  border: 1px solid #a8a8a8;
  line-height: 13px;
  font-size: 13px;
  white-space: nowrap;
}
.pin { position: absolute; right: 21px; top: 1px; width: 10px; height: 12px; }
.xx { position: absolute; right: 4px; top: 2px; width: 10px; height: 10px; }
.nav { width: 144px; flex: none; display: flex; flex-direction: column; margin-right: 4px; }
.nav .ptitle { width: 143px; box-sizing: border-box; height: 15px; }
.navbtn {
  height: 22px;
  width: 142px;
  margin: 0 0 0 1px;
  padding: 0;
  flex: none;
  background: #efefef;
  border: 1px solid #a8a8a8;
  font: inherit;
  color: #111;
}
.navbtn.first { margin-top: 3px; }
.navbtn.low { margin-top: 2px; }
.treetools {
  height: 25px;
  flex: none;
  margin: 1px 0 0 1px;
  width: 142px;
  background: #fff;
  display: flex;
  align-items: flex-start;
  gap: 9px;
  padding: 3px 0 0 7px;
  box-sizing: border-box;
}
.treebox {
  flex: 1;
  min-height: 0;
  margin-left: 2px;
  width: 141px;
  box-sizing: border-box;
  border: 1px solid #999;
  background: #fff;
  display: flex;
  flex-direction: column;
}
.treewrap { flex: 1; min-height: 0; display: flex; overflow: hidden; }
.tree { flex: 1; min-width: 0; margin: 2px 0 0; padding: 0; list-style: none; overflow: hidden; }
.tree li { position: relative; height: 16px; display: flex; align-items: center; white-space: nowrap; }
.fold { padding-left: 12px; }
.fold .fi { width: 16px; height: 14px; margin-right: 5px; flex: none; }
.tw-closed, .tw-open { position: absolute; left: 1px; top: 5px; width: 0; height: 0; border: 3px solid transparent; }
.tw-closed { border-left: 4px solid #bbb; border-right: 0; }
.tw-open { border: 0; width: 4px; height: 4px; background: #444; clip-path: polygon(100% 0, 100% 100%, 0 100%); top: 6px; }
.leaf { padding-left: 31px; }
.leaf::before { content: ""; position: absolute; left: 22px; top: 0; bottom: 0; border-left: 1px dotted #777; }
.leaf.last::before { bottom: 8px; }
.leaf::after { content: ""; position: absolute; left: 23px; top: 8px; width: 8px; border-top: 1px dotted #777; }
.leafin { display: flex; align-items: center; height: 16px; gap: 4px; position: relative; z-index: 1; }
.leafin.picked { background: #d6d6d6; padding: 0 3px 0 2px; margin-left: -2px; }
.lt { white-space: nowrap; line-height: 14px; margin-bottom: 2px; }
.sb { flex: none; display: flex; flex-direction: column; align-items: center; background: #f0f0f0; position: relative; }
.chev { width: 9px; height: 7px; flex: none; margin: 5px 0; }
.chev.end { margin-top: auto; }
.chev.pale { opacity: .35; }
.thumb { align-self: stretch; background: #c9c9c9; flex: none; }
.tree-sb { width: 15px; margin-right: 1px; }
.tree-thumb { height: 369px; margin-top: 39px; }
.hsb { height: 19px; flex: none; background: #f0f0f0; display: flex; align-items: center; padding: 0 7px 0 9px; }
.chevh { width: 7px; height: 10px; flex: none; }
.hthumb { width: 70px; height: 16px; background: #c9c9c9; margin-left: 8px; }
.chevh.end { margin-left: auto; }

.parts { width: 250px; flex: none; display: flex; flex-direction: column; margin-right: 2px; }
.parts .ptitle { height: 14px; }
.parts-tools { height: 30px; flex: none; display: flex; align-items: center; background: #fff; padding: 0 0 3px 4px; box-sizing: border-box; }
.pt-new { margin-left: 5px; }
.pt-del { margin-left: 8px; }
.pt-copy { margin-left: 7px; }
.pt-funnel { margin: 0 4px 0 8px; }
.searchrow { height: 23px; flex: none; display: flex; align-items: stretch; gap: 5px; background: #fff; }
.searchbox { width: 225px; margin-left: 1px; box-sizing: border-box; border: 1px solid #8a8a8a; color: #888; padding: 1px 2px 0; }
.searchrow .ic { align-self: center; }
.listbox {
  height: 298px;
  flex: none;
  margin-top: 3px;
  border: 1px solid #b5b5b5;
  box-sizing: border-box;
  background: #fff;
  display: flex;
  overflow: hidden;
  padding: 1px 0 0 1px;
}
.grid { width: 229px; flex: none; display: grid; grid-template-columns: 26px 203px; grid-auto-rows: 19px; grid-template-rows: 21px; align-content: start; }
.ghead { background: linear-gradient(#fde0a6, #f1c062); color: #5b0080; text-align: center; line-height: 20px; }
.ghead.num { background: #f2f2f2; border-right: 1px solid #ddd; box-sizing: border-box; }
.gnum { background: linear-gradient(#fbfbfb, #e9e9e9); border-bottom: 1px solid #bdbdbd; border-right: 1px solid #c8c8c8; box-sizing: border-box; text-align: center; line-height: 17px; }
.gnum.cur { background: #fcd18f; color: #880000; }
.gcell { border-bottom: 1px solid #bdbdbd; border-right: 1px solid #bdbdbd; box-sizing: border-box; padding-left: 20px; white-space: nowrap; line-height: 16px; }
.gcell.cur { background: #d6e8f6; }
.list-sb { width: 17px; margin-left: 1px; margin-top: -1px; }
.list-thumb { height: 58px; margin-top: 0; }
.attr-title { margin-top: 7px !important; height: 14px; }
.attrbox { flex: 1; min-height: 0; margin-top: 2px; border: 1px solid #b5b5b5; border-left-width: 2px; box-sizing: border-box; background: #fff; display: flex; overflow: hidden; padding: 1px 0 0 1px; }
.attrgrid { width: 229px; flex: none; display: grid; grid-template-columns: 84px 94px; grid-auto-rows: 21px; align-content: start; }
.ahead { background: linear-gradient(#fff, #eee); border-right: 1px solid #c0c0c0; border-bottom: 1px solid #c0c0c0; box-sizing: border-box; padding: 2px 0 0 3px; }
.ahead.val { background: linear-gradient(#fde0a6, #f1c062); color: #5b0080; padding-left: 2px; }
.akey, .aval { border-bottom: 1px solid #c0c0c0; border-right: 1px solid #c0c0c0; box-sizing: border-box; white-space: nowrap; overflow: hidden; padding-top: 2px; }
.akey { padding-left: 21px; }
.aval { padding-left: 3px; }
.akey.b { color: #0000ff; }
.akey.g, .aval.g { color: #8a8a8a; }
.aval.cur { background: #d6e8f6; }
.attr-sb { width: 16px; margin-left: 1px; }
.attr-thumb { height: 167px; margin-top: 0; }

/* drawing area */
.work { flex: 1; min-width: 0; display: flex; flex-direction: column; }
.row1 { height: 28px; flex: none; background: #f6f6f6; padding-top: 2px; }
.row1 .zone { margin-top: -2px; }
.row2 { height: 30px; flex: none; background: #f6f6f6; border-bottom: 1px solid #d5d5d5; padding-top: 2px; }
.row2 .zone { margin-top: -2px; }
.stage { flex: 1; min-height: 0; display: flex; }
.strip {
  width: 30px;
  flex: none;
  background: #f0f0f0;
  display: flex;
  flex-direction: column;
  align-items: center;
  padding: 10px 0 0 2px;
  box-sizing: border-box;
}
.strip hr { width: 20px; margin: 6px 0; border: 0; border-top: 1px solid #999; }
.si3 { margin-top: 7px; }
.strip-low { margin-top: auto; display: flex; flex-direction: column; align-items: center; padding-bottom: 2px; }
.vtext { writing-mode: vertical-rl; letter-spacing: 0; color: #555; margin-right: 4px; }
.vmore { margin: 16px 0 0 10px; transform: rotate(90deg); font-weight: 700; line-height: 12px; }
.canvas { flex: 1; min-width: 0; height: 670px; display: block; }
.ct { font: 14px "Liberation Sans", sans-serif; text-anchor: middle; }
.ct.small { font-size: 14px; }
.bottombar { height: 30px; flex: none; display: flex; align-items: flex-start; border-bottom: 1px solid #ddd; box-sizing: border-box; padding-top: 1px; }
.offset {
  width: 428px;
  margin-left: 3px;
  height: 28px;
  flex: none;
  box-sizing: border-box;
  border: 1px solid #dcdcdc;
  border-top: 0;
  display: flex;
  align-items: center;
  padding-left: 10px;
  color: #777;
}
.nooff {
  width: 55px;
  height: 20px;
  flex: none;
  background: #f6f6f6;
  display: flex;
  justify-content: space-between;
  align-items: center;
  color: #8c8c8c;
  box-sizing: border-box;
}
.nooff b { width: 13px; height: 100%; background: #d4d4d4; display: flex; align-items: center; justify-content: center; }
.vbar { width: 1px; height: 24px; background: #999; margin: 0 3px 0 5px; flex: none; }
.vbar.v2 { margin: 0 3px 0 4px; }
.lbl { flex: none; font-size: 12px; letter-spacing: .5px; }
.lbl.x { width: 28px; }
.lbl.mm { margin-left: 3px; width: 24px; }
.lbl.y { width: 30px; }
.lbl.deg { margin-left: 5px; }
.num { width: 41px; height: 20px; flex: none; background: #f5f5f5; border: 1px solid #fff; box-sizing: border-box; text-align: right; padding-right: 3px; line-height: 18px; color: #888; }
.num.wide { width: 51px; }
.spin { width: 13px; height: 20px; flex: none; display: flex; flex-direction: column; gap: 1px; background: #eee; }
.spin i { flex: 1; display: flex; align-items: center; justify-content: center; background: #e5e5e5; }
.spin i::before { content: ""; border: 3px solid transparent; border-bottom: 4px solid #888; border-top: 0; }
.spin i.dn::before { border-bottom: 0; border-top: 4px solid #888; }
.check { width: 12px; height: 16px; flex: none; border: 1px solid #333; background: #fff; box-sizing: border-box; }
.rot { margin: 0 5px 0 8px; color: #111; }
.snap { margin-left: 48px; height: 28px; border-right: 1px solid #dcdcdc; border-bottom: 1px solid #dcdcdc; }
.snap .btn { height: 24px; align-self: center; }

/* status and task bars */
.statusbar {
  height: 22px;
  flex: none;
  display: flex;
  align-items: center;
  border-top: 2px solid #dedede;
  box-sizing: border-box;
  white-space: nowrap;
}
.cell { height: 100%; box-sizing: border-box; border-right: 1px solid #d2d2d2; padding-left: 1px; line-height: 19px; flex: none; overflow: hidden; }
.taskbar { height: 40px; flex: none; background: #474747; display: flex; align-items: stretch; }
.tb-win { width: 48px; display: flex; align-items: center; justify-content: center; flex: none; }
.tb-view { margin-right: 3px; }
.tb-app { width: 48.8px; flex: none; display: flex; flex-direction: column; align-items: center; justify-content: flex-end; }
.tb-app.act { background: #666; }
.appic { width: 26px; height: 28px; margin-bottom: 4px; }
.run { width: 40px; height: 2px; background: #6fb2e8; display: block; flex: none; }
.tb-app.act .run { width: 100%; }
.tray { margin-left: auto; display: flex; align-items: center; color: #fff; font-family: "Noto Sans", "Noto Sans CJK SC", sans-serif; }
.tray > svg:nth-child(1) { margin-right: 10px; }
.tray > svg:nth-child(2) { margin-right: 7px; }
.ime { font-size: 16px; margin: 0 0 0 7px; width: 18px; }
.clock { width: 71px; margin-left: 6px; display: flex; flex-direction: column; align-items: center; gap: 2px; line-height: 16px; }
.notif { position: relative; width: 48px; height: 40px; display: flex; align-items: center; justify-content: center; margin-right: 9px; }
.badge { position: absolute; left: 25px; top: 19px; width: 16px; height: 16px; border-radius: 50%; border: 1px solid #ddd; background: #333; font-size: 11px; font-weight: 700; text-align: center; line-height: 15px; box-sizing: border-box; }

/* overlays */
.topshadow { position: absolute; left: 958px; top: -4px; width: 298px; height: 4px; box-shadow: 0 1px 5px rgba(0, 0, 0, .55); }
.hint {
  position: absolute;
  left: 1084px;
  top: 646px;
  width: 148px;
  height: 32px;
  box-sizing: border-box;
  padding: 1px 0 0 9px;
  background: #1e1b62;
  border: 1px solid #565682;
  color: #8e8eb0;
  line-height: 14px;
  white-space: nowrap;
}
.dialog {
  position: absolute;
  left: 399px;
  top: 225px;
  width: 699px;
  height: 501px;
  background: #f0f0f0;
  box-shadow: 0 0 2px rgba(0, 0, 0, .3);
  display: flex;
  flex-direction: column;
}
.dlg-title { height: 30px; flex: none; background: #fff; display: flex; align-items: center; padding-left: 5px; gap: 5px; color: #222; }
.dlg-btns { margin-left: auto; display: flex; gap: 33px; padding-right: 17px; }
.dlg-body { flex: 1; padding: 16px 0 0 9px; }
.dlg-top { display: flex; gap: 14px; height: 52px; }
.gb { margin: 0; padding: 0; min-width: 0; box-sizing: border-box; border: 1px solid #dcdcdc; }
.gb legend { padding: 0; margin-left: 6px; line-height: 14px; background: #f0f0f0; }
.type { width: 190px; height: 52px; }
.radio { display: inline-flex; align-items: center; gap: 3px; margin: 10px 0 0 12px; height: 16px; vertical-align: top; }
.radio.r2 { margin-left: 10px; }
.dot { width: 13px; height: 13px; border-radius: 50%; border: 1px solid #333; box-sizing: border-box; background: #fff; display: flex; align-items: center; justify-content: center; flex: none; }
.dot.on::before { content: ""; width: 7px; height: 7px; border-radius: 50%; background: #222; }
.selects { padding-top: 5px; display: flex; flex-direction: column; gap: 7px; }
.sel-row { display: flex; align-items: center; height: 20px; }
.sel-l { width: 70px; flex: none; }
.sel { width: 406px; height: 20px; box-sizing: border-box; background: #e3e3e3; border: 1px solid #adadad; display: flex; align-items: center; justify-content: space-between; padding: 0 3px 0 3px; }
.calc { width: 680px; height: 232px; margin-top: 10px; padding: 5px 0 0 9px; }
.calc legend { margin-left: -3px; }
.formula { position: relative; width: 659px; height: 205px; box-sizing: border-box; background: #fff; border: 1px solid #a8a8a8; padding: 2px 0 0 2px; overflow: hidden; }
.cursor { position: absolute; left: 2px; top: 2px; width: 1px; height: 16px; background: #000; }
.fline { height: 16px; line-height: 16px; padding-left: 24px; white-space: nowrap; }
.fline.wrap { padding-left: 0; }
.form-sb { position: absolute; right: 1px; top: 3px; bottom: 3px; width: 15px; background: #f3f3f3; }
.manual { width: 680px; height: 98px; margin-top: 17px; padding: 3px 0 0 2px; }
.manual legend { margin-left: 4px; }
.mbox { width: 666px; height: 44px; box-sizing: border-box; background: #fff; border: 1px solid #777; }
.mrow { display: flex; align-items: center; margin: 7px 0 0 8px; height: 22px; }
.wbtn { background: #e1e1e1; border: 1px solid #adadad; padding: 0; font: inherit; color: #111; height: 23px; flex: none; }
.reset { width: 88px; height: 22px; }
.mlbl { margin-left: 23px; width: 86px; flex: none; }
.mres { width: 461px; height: 19px; box-sizing: border-box; background: #ffffe1; border: 1px solid #777; }
.dlg-foot { display: flex; margin: 14px 0 0 1px; }
.f1 { width: 106px; }
.f2 { width: 113px; margin-left: 18px; }
.f3 { width: 108px; margin-left: 18px; }
.close { width: 72px; margin-left: 242px; border: 2px solid #0078d7; }
.watermark { position: absolute; left: 1175px; top: 773px; color: rgba(128, 128, 128, .55); white-space: nowrap; pointer-events: none; }
.wm1 { font-size: 20px; line-height: 26px; }
.wm2 { font-size: 14px; line-height: 20px; margin-top: 1px; }
</style>

<style>
html, body { margin: 0; padding: 0; background: #f0f0f0; }
</style>
